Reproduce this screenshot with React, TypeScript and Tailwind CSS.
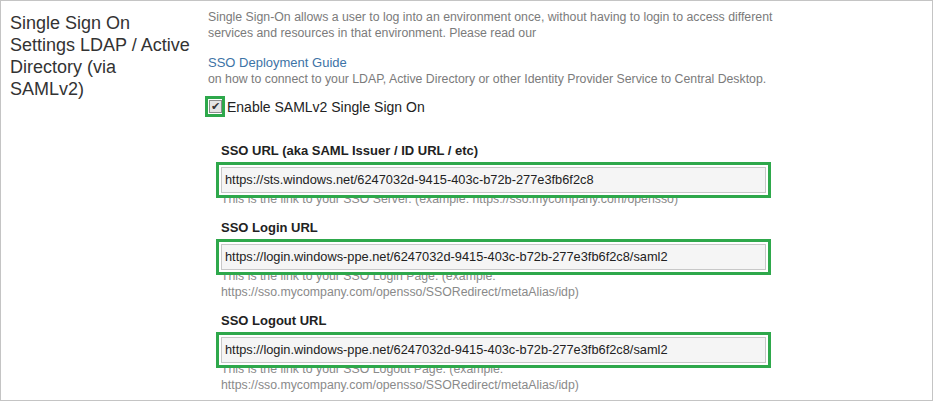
const FIELDS = [
  {
    label: 'SSO URL (aka SAML Issuer / ID URL / etc)',
    value: 'https://sts.windows.net/6247032d-9415-403c-b72b-277e3fb6f2c8',
    help: ['This is the link to your SSO Server. (example: https://sso.mycompany.com/opensso)'],
  },
  {
    label: 'SSO Login URL',
    value: 'https://login.windows-ppe.net/6247032d-9415-403c-b72b-277e3fb6f2c8/saml2',
    help: ['This is the link to your SSO Login Page. (example:', 'https://sso.mycompany.com/opensso/SSORedirect/metaAlias/idp)'],
  },
  {
    label: 'SSO Logout URL',
    value: 'https://login.windows-ppe.net/6247032d-9415-403c-b72b-277e3fb6f2c8/saml2',
    help: ['This is the link to your SSO Logout Page. (example:', 'https://sso.mycompany.com/opensso/SSORedirect/metaAlias/idp)'],
  },
];

function Field({ label, value, help }: { label: string; value: string; help: string[] }) {
  return (
    <div className="flex flex-col">
      <div className="text-[13px] leading-4 font-bold text-[#222]">{label}</div>
      {/* green annotation frame */}
      <div className="relative z-10 mt-[3px] -ml-[5px] w-[555px] border-[3px] border-[#2ea84b] bg-white p-[2px]">
        <div className="h-[26px] border border-[#c8c8c8] bg-[#f5f5f5] pl-[3px] text-[12.8px] leading-[24px] text-[#222] whitespace-nowrap">
          {value}
        </div>
      </div>
      <div className="-mt-[7px] text-[12.3px] leading-4 text-[#8a8a8a]">
        {help.map((line) => (
          <div key={line}>{line}</div>
        ))}
      </div>
    </div>
  );
}

export default function App() {
  return (
    <div
      className="flex h-[401px] w-[933px] border border-[#c4c4c4] bg-white"
      style={{ fontFamily: '"Liberation Sans", Arial, sans-serif' }}
    >
      {/* left title column */}
      <div className="w-[207px] shrink-0 pl-[9px] pt-[11px] text-[18px] leading-[22px] text-[#333]">
        Single Sign On
        <br />
        Settings LDAP / Active
        <br />
        Directory (via
        <br />
        SAMLv2)
      </div>

      {/* right content column */}
      <div className="flex flex-col pt-[8px]">
        <p className="w-[580px] text-[12.3px] leading-4 text-[#7b7b7b]">
          Single Sign-On allows a user to log into an environment once, without having to login to access different
          services and resources in that environment. Please read our
        </p>
        <div className="mt-[14px] text-[13px] leading-4 text-[#3d73a6]">SSO Deployment Guide</div>
        <div className="text-[12.3px] leading-4 text-[#7b7b7b]">
          on how to connect to your LDAP, Active Directory or other Identity Provider Service to Central Desktop.
        </div>

        <div className="mt-[9px] flex items-center">
          <span className="-ml-[3px] flex h-[21px] w-[20px] items-center justify-center border-[3px] border-[#2ea84b]">
            <span className="flex h-[13px] w-[13px] items-center justify-center border border-[#8c8c8c] bg-[#e4e4e4] text-[11px] leading-none text-[#333]">
              ✔
            </span>
          </span>
          <span className="ml-[2px] text-[14px] leading-5 text-[#222]">Enable SAMLv2 Single Sign On</span>
        </div>

        <div className="mt-[26px] flex flex-col gap-[13px] pl-[13px]">
          {FIELDS.map((f) => (
            <Field key={f.label} {...f} />
          ))}
        </div>
      </div>
    </div>
  );
}
